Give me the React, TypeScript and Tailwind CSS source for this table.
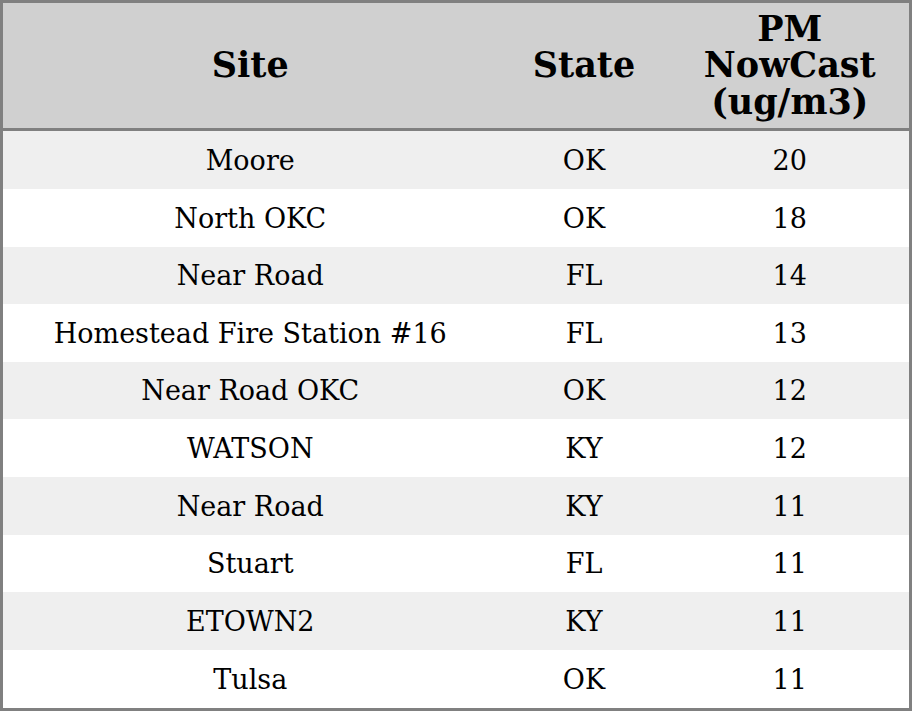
const rows = [
  ["Moore", "OK", "20"],
  ["North OKC", "OK", "18"],
  ["Near Road", "FL", "14"],
  ["Homestead Fire Station #16", "FL", "13"],
  ["Near Road OKC", "OK", "12"],
  ["WATSON", "KY", "12"],
  ["Near Road", "KY", "11"],
  ["Stuart", "FL", "11"],
  ["ETOWN2", "KY", "11"],
  ["Tulsa", "OK", "11"],
];

function App() {
  return (
    <div className="w-[912px] h-[711px] bg-white font-['DejaVu_Serif',serif] text-black">
      <table className="w-full h-full border-[3px] border-[#808080] border-collapse table-fixed">
        <colgroup>
          <col className="w-[496px]" />
          <col className="w-[173px]" />
          <col />
        </colgroup>
        <thead>
          <tr className="bg-[#d0d0d0] h-[128px] border-b-[3px] border-[#808080] text-[35px] leading-[36.5px] font-bold">
            <th className="text-center">Site</th>
            <th className="text-center">State</th>
            <th className="text-center px-4">PM NowCast (ug/m3)</th>
          </tr>
        </thead>
        <tbody className="text-[27px]">
          {rows.map((r, i) => (
            <tr key={i} className={i % 2 === 0 ? "bg-[#efefef]" : "bg-white"}>
              <td className="text-center pt-[2px]">{r[0]}</td>
              <td className="text-center pt-[2px]">{r[1]}</td>
              <td className="text-center pt-[2px]">{r[2]}</td>
            </tr>
          ))}
        </tbody>
      </table>
    </div>
  );
}

export default App;
